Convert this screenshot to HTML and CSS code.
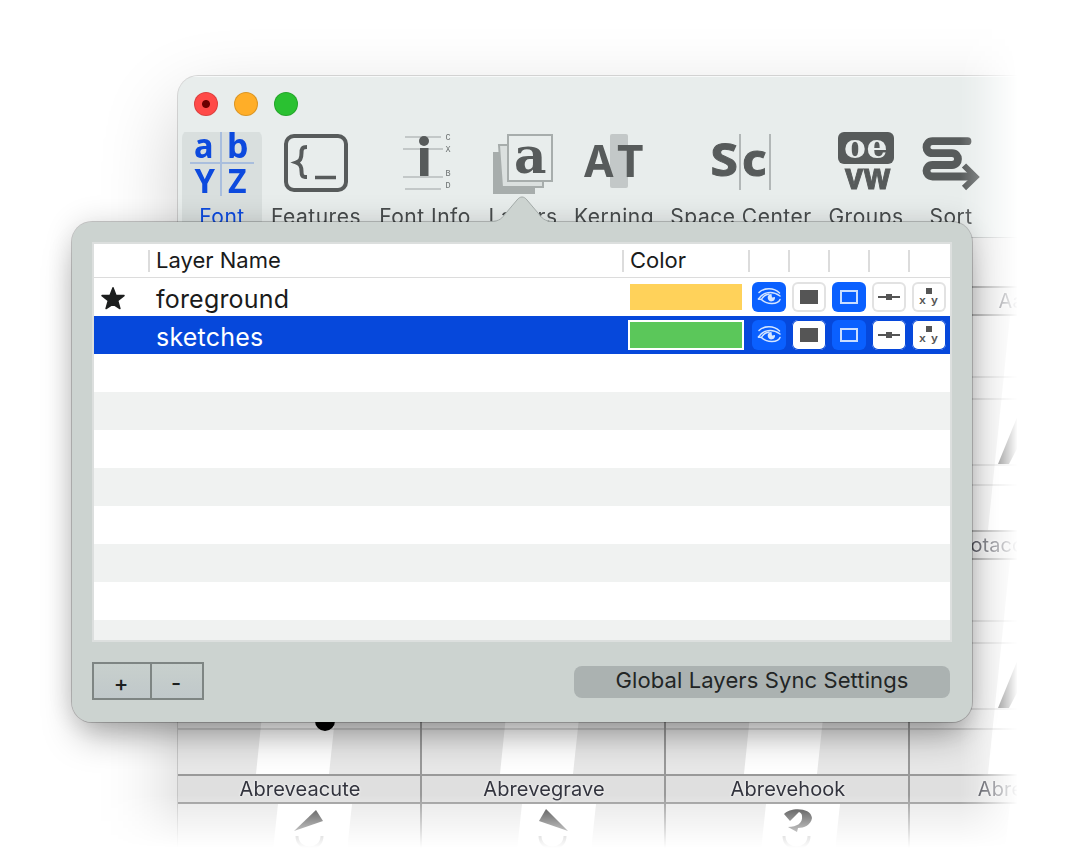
FILE: index.html
```html
<!DOCTYPE html>
<html lang="en">
<head>
    <meta charset="UTF-8">
    <meta name="viewport" content="width=device-width, initial-scale=1.0">
    <title>Layers</title>
    <link rel="stylesheet" href="styles.css">
</head>
<body>
    <div class="stage">
        <div class="backdrop">
            <div class="window">
                <div class="titlebar">
                    <span class="light close"></span>
                    <span class="light minimize"></span>
                    <span class="light zoom"></span>
                </div>

                <div class="toolbar">
                    <div class="tool tool-font active">
                        <svg width="80" height="68" viewBox="182 130 80 68">
                            <path d="M190 163H254M221 132V196" stroke="#a9bedd" stroke-width="2"/>
                            <g class="sans-bold" fill="#0d4ade" font-size="34">
                                <text x="194" y="158" textLength="20" lengthAdjust="spacingAndGlyphs">a</text>
                                <text x="227" y="158" textLength="22" lengthAdjust="spacingAndGlyphs">b</text>
                                <text x="194.500" y="193" textLength="21" lengthAdjust="spacingAndGlyphs">Y</text>
                                <text x="228" y="193" textLength="19" lengthAdjust="spacingAndGlyphs">Z</text>
                            </g>
                        </svg>
                        <span>Font</span>
                    </div>
                    <div class="tool tool-features">
                        <svg width="108" height="68" viewBox="262 130 108 68">
                            <rect x="286" y="136" width="60" height="54" rx="8" fill="none" stroke="#575b5b" stroke-width="4"/>
                            <path d="M307 147C302 147 301.500 149 301.500 153C301.500 159 300 161 296 162.500C300 164 301.500 166 301.500 171C301.500 175.500 302 177 307 177" fill="none" stroke="#575b5b" stroke-width="4"/>
                            <path d="M315 177.500H336" stroke="#575b5b" stroke-width="3.500"/>
                        </svg>
                        <span>Features</span>
                    </div>
                    <div class="tool tool-info">
                        <svg width="110" height="68" viewBox="370 130 110 68">
                            <path d="M405 137H441M403 149H443M403 177H443M405 189H441" stroke="#c3c8c8" stroke-width="2"/>
                            <circle cx="424" cy="141" r="5" fill="#575b5b"/>
                            <rect x="420" y="148" width="8.500" height="28" fill="#575b5b"/>
                            <g class="mono" fill="#6d7272" font-size="8.500">
                                <text x="445.500" y="140">C</text>
                                <text x="445.500" y="151.500">X</text>
                                <text x="445.500" y="175.500">B</text>
                                <text x="445.500" y="187.500">D</text>
                            </g>
                        </svg>
                        <span>Font Info</span>
                    </div>
                    <div class="tool tool-layers">
                        <svg width="86" height="68" viewBox="480 130 86 68">
                            <path d="M493 152H535V194H493Z" fill="#a7adac"/>
                            <path d="M499 145H543V187H502Z" fill="#dbe0df" stroke="#a7adac" stroke-width="2"/>
                            <rect x="508" y="135" width="44" height="46" fill="#e8edec" stroke="#a7adac" stroke-width="2"/>
                            <text class="slab-bold" x="514" y="172.500" font-size="51" fill="#575b5b" textLength="33" lengthAdjust="spacingAndGlyphs">a</text>
                        </svg>
                        <span>Layers</span>
                    </div>
                    <div class="tool tool-kerning">
                        <svg width="96" height="68" viewBox="566 130 96 68">
                            <rect x="610" y="134" width="18" height="54" rx="2" fill="#c3c8c8"/>
                            <g class="sans-bold" fill="#575b5b" font-size="45">
                                <text x="584" y="177" textLength="30" lengthAdjust="spacingAndGlyphs">A</text>
                                <text x="617" y="177" textLength="27" lengthAdjust="spacingAndGlyphs">T</text>
                            </g>
                        </svg>
                        <span>Kerning</span>
                    </div>
                    <div class="tool tool-space">
                        <svg width="158" height="68" viewBox="662 130 158 68">
                            <path d="M740 134V190M770 134V190" stroke="#b2b7b7" stroke-width="2"/>
                            <g class="sans-bold heavy" fill="#575b5b" font-size="45">
                                <text x="710.500" y="175.500" textLength="28" lengthAdjust="spacingAndGlyphs">S</text>
                                <text x="742" y="175.500" textLength="25" lengthAdjust="spacingAndGlyphs">c</text>
                            </g>
                        </svg>
                        <span>Space Center</span>
                    </div>
                    <div class="tool tool-groups">
                        <svg width="92" height="68" viewBox="820 130 92 68">
                            <rect x="838" y="132" width="56" height="32" rx="6" fill="#575b5b"/>
                            <text class="slab-bold" x="844" y="157.500" font-size="34" fill="#e8edec" textLength="44" lengthAdjust="spacingAndGlyphs">oe</text>
                            <text class="sans-bold heavy" x="845" y="189" font-size="35" fill="#575b5b" textLength="46" lengthAdjust="spacingAndGlyphs">vw</text>
                        </svg>
                        <span>Groups</span>
                    </div>
                    <div class="tool tool-sort">
                        <svg width="78" height="68" viewBox="912 130 78 68">
                            <path d="M967.500 141.200H932.500C924.500 141.200 924.500 153.200 932.500 153.200H952C960 153.200 960 165 952 165H932.500C924.500 165 924.500 176.500 932.500 176.500H973" fill="none" stroke="#575b5b" stroke-width="7.800" stroke-linecap="round"/>
                            <path d="M964 165.500L975.500 177L964 188" fill="none" stroke="#575b5b" stroke-width="6"/>
                        </svg>
                        <span>Sort</span>
                    </div>
                </div>

                <div class="glyphs">
                    <div class="cell partial"></div>
                    <div class="cell partial"></div>
                    <div class="cell partial"></div>
                    <div class="cell partial"></div>
                    <div class="name"></div>
                    <div class="name"></div>
                    <div class="name"></div>
                    <div class="name">Aacute</div>

                    <div class="cell"></div>
                    <div class="cell"></div>
                    <div class="cell"></div>
                    <div class="cell">
                        <svg width="242" height="214" viewBox="0 0 242 214">
                            <path class="body" d="M100 0H174L151 214H78Z"/>
                            <path class="guide" d="M0 61H242M0 83H242M0 149H242M0 169H242"/>
                            <path d="M88 148L124 60V100L99 148Z" fill="#222"/>
                        </svg>
                    </div>
                    <div class="name"></div>
                    <div class="name"></div>
                    <div class="name"></div>
                    <div class="name">Adotaccentgrave2</div>

                    <div class="cell">
                        <svg width="242" height="214" viewBox="0 0 242 214">
                            <path class="body" d="M100 0H174L151 214H78Z"/>
                            <path class="guide" d="M0 169H242"/>
                            <circle cx="147" cy="161" r="10" fill="#000"/>
                        </svg>
                    </div>
                    <div class="cell">
                        <svg width="242" height="214" viewBox="0 0 242 214">
                            <path class="body" d="M100 0H174L151 214H78Z"/>
                            <path class="guide" d="M0 169H242"/>
                        </svg>
                    </div>
                    <div class="cell">
                        <svg width="242" height="214" viewBox="0 0 242 214">
                            <path class="body" d="M100 0H174L151 214H78Z"/>
                            <path class="guide" d="M0 169H242"/>
                        </svg>
                    </div>
                    <div class="cell">
                        <svg width="242" height="214" viewBox="0 0 242 214">
                            <path class="body" d="M100 0H174L151 214H78Z"/>
                            <path class="guide" d="M0 61H242M0 83H242M0 149H242M0 169H242"/>
                            <path d="M88 148L124 60V100L99 148Z" fill="#222"/>
                        </svg>
                    </div>
                    <div class="name">Abreveacute</div>
                    <div class="name">Abrevegrave</div>
                    <div class="name">Abrevehook</div>
                    <div class="name">Abrevetilde</div>

                    <div class="cell last">
                        <svg width="242" height="45" viewBox="0 0 242 45">
                            <path class="body" d="M100 0H174L169.200 45H95.200Z"/>
                            <path d="M116 27L138 6L145 17Z" fill="#333"/>
                            <path class="breve" d="M119 32C119 48 144 48 144 32"/>
                        </svg>
                    </div>
                    <div class="cell last">
                        <svg width="242" height="45" viewBox="0 0 242 45">
                            <path class="body" d="M100 0H174L169.200 45H95.200Z"/>
                            <path d="M124 5L117 17L146 27Z" fill="#333"/>
                            <path class="breve" d="M118 32C118 48 143 48 143 32"/>
                        </svg>
                    </div>
                    <div class="cell last">
                        <svg width="242" height="45" viewBox="0 0 242 45">
                            <path class="body" d="M100 0H174L169.200 45H95.200Z"/>
                            <path d="M118 10C124 3 145 3 146 14C145 21 138 24 132 24L131 28L122 23C131 23 137 19 136 12C136 10 135 9 133 8L124 17Z" fill="#333"/>
                            <path class="breve" d="M118 32C118 48 143 48 143 32"/>
                        </svg>
                    </div>
                    <div class="cell last">
                        <svg width="242" height="45" viewBox="0 0 242 45">
                            <path class="body" d="M100 0H174L169.200 45H95.200Z"/>
                        </svg>
                    </div>
                </div>
            </div>
            <div class="popover-shadow"></div>
        </div>

        <div class="popover">
            <svg class="arrow" width="64" height="27" viewBox="0 0 64 27">
                <path d="M0 27V26C10 26 12 22 16 17L27 4C30 0 34 0 37 4L48 17C52 22 54 26 64 26V27Z" fill="#ccd3d0"/>
                <path d="M0 25.500C10 25.500 12 22 16 17L27 4C30 0 34 0 37 4L48 17C52 22 54 25.500 64 25.500" fill="none" stroke="#a3aaa8"/>
            </svg>

            <div class="table">
                <div class="row header">
                    <span></span>
                    <span class="label">Layer Name</span>
                    <span class="label">Color</span>
                    <span></span>
                    <span></span>
                    <span></span>
                    <span></span>
                    <span></span>
                </div>
                <div class="row">
                    <svg class="star" width="24" height="23" viewBox="0 0 24 23"><path d="M12 .800L14.900 8.200L23 8.600L16.700 13.600L18.900 21.500L12 17.100L5.100 21.500L7.300 13.600L1 8.600L9.100 8.200Z" fill="#1c1e1e" stroke="#1c1e1e" stroke-width="1.500" stroke-linejoin="round"/></svg>
                    <span class="layer">foreground</span>
                    <span class="swatch yellow"></span>
                    <span class="toggle on"><svg width="34" height="30" viewBox="0 0 34 30"><use href="#eye"/></svg></span>
                    <span class="toggle"><svg width="34" height="30" viewBox="0 0 34 30"><use href="#fill"/></svg></span>
                    <span class="toggle on"><svg width="34" height="30" viewBox="0 0 34 30"><use href="#stroke"/></svg></span>
                    <span class="toggle"><svg width="34" height="30" viewBox="0 0 34 30"><use href="#points"/></svg></span>
                    <span class="toggle"><svg width="34" height="30" viewBox="0 0 34 30"><use href="#coords"/></svg></span>
                </div>
                <div class="row selected">
                    <span></span>
                    <span class="layer">sketches</span>
                    <span class="swatch green"></span>
                    <span class="toggle on"><svg width="34" height="30" viewBox="0 0 34 30"><use href="#eye"/></svg></span>
                    <span class="toggle"><svg width="34" height="30" viewBox="0 0 34 30"><use href="#fill"/></svg></span>
                    <span class="toggle on"><svg width="34" height="30" viewBox="0 0 34 30"><use href="#stroke"/></svg></span>
                    <span class="toggle"><svg width="34" height="30" viewBox="0 0 34 30"><use href="#points"/></svg></span>
                    <span class="toggle"><svg width="34" height="30" viewBox="0 0 34 30"><use href="#coords"/></svg></span>
                </div>
                <div class="stripes"></div>
            </div>

            <div class="footer">
                <div class="segmented">
                    <button class="segment">+</button>
                    <button class="segment">-</button>
                </div>
                <button class="sync">Global Layers Sync Settings</button>
            </div>
        </div>
    </div>

    <!-- Toggle icons shared by the layer rows -->
    <svg class="symbols" width="0" height="0">
        <symbol id="eye" viewBox="0 0 34 30">
            <g fill="none" stroke="#d5e6ff" stroke-width="1.500" stroke-linecap="round">
                <path d="M7 10.500C12 5.500 22 5.500 27.500 11"/>
                <path d="M6.500 17C11 10 20 8 28 14"/>
                <path d="M6.500 17L9.500 17.500C14 22.500 26 23 28 17.500"/>
                <path d="M9.500 17.500C11 14 14 12.500 17 12"/>
            </g>
            <path d="M19.500 12A3.700 3.700 0 1 0 23 15L20 15.500Z" fill="#d5e6ff"/>
        </symbol>
        <symbol id="fill" viewBox="0 0 34 30">
            <rect x="8" y="8" width="18" height="14" fill="#555"/>
        </symbol>
        <symbol id="stroke" viewBox="0 0 34 30">
            <rect x="9" y="9" width="16" height="12" fill="none" stroke="#c9deff" stroke-width="2"/>
        </symbol>
        <symbol id="points" viewBox="0 0 34 30">
            <path d="M6 15H28" stroke="#555" stroke-width="2"/>
            <rect x="14" y="12" width="6" height="6" fill="#555"/>
        </symbol>
        <symbol id="coords" viewBox="0 0 34 30">
            <rect x="14" y="6" width="6" height="6" fill="#555"/>
            <text class="mono-bold" x="7" y="21.500" font-size="11.500" fill="#555">x</text>
            <text class="mono-bold" x="19" y="21.500" font-size="11.500" fill="#555">y</text>
        </symbol>
    </svg>
</body>
</html>
```

FILE: styles.css
```css
:root {
    --chrome: #e8edec;
    --popover: #ccd3d0;
    --ink: #484c4d;
    --accent: #0a60ff;
    --line: #999;
}

* {
    box-sizing: border-box;
}

body {
    margin: 0;
    background: #fff;
    font-family: Inter, "Liberation Sans", sans-serif;
    overflow: hidden;
}

.stage {
    position: relative;
    width: 1073px;
    height: 849px;
    overflow: hidden;
}

/* Window behind the popover, faded out to the right and the bottom */
.backdrop {
    width: 1017px;
    height: 849px;
    padding: 76px 0 0 178px;
    overflow: hidden;
    -webkit-mask-image: linear-gradient(to right, #000 960px, rgba(0, 0, 0, 0.8) 976px, rgba(0, 0, 0, 0.35) 1000px, transparent 1018px), linear-gradient(to bottom, #000 795px, transparent 848px);
    -webkit-mask-composite: source-in;
    mask-image: linear-gradient(to right, #000 960px, rgba(0, 0, 0, 0.8) 976px, rgba(0, 0, 0, 0.35) 1000px, transparent 1018px), linear-gradient(to bottom, #000 795px, transparent 848px);
    mask-composite: intersect;
}

.window {
    width: 974px;
    height: 900px;
    border-radius: 20px 0 0 0;
    background: var(--chrome);
    box-shadow: 0 0 0 1px rgba(0, 0, 0, 0.14), 0 30px 80px rgba(0, 0, 0, 0.2);
    overflow: hidden;
}

.titlebar {
    display: flex;
    gap: 16px;
    height: 54px;
    padding: 16px 0 0 16px;
    box-shadow: inset 0 1px 0 #f7f9f9;
}

.light {
    width: 24px;
    height: 24px;
    border-radius: 50%;
    border: 1px solid rgba(0, 0, 0, 0.14);
}

.close {
    background: radial-gradient(circle, #6b0000 3.500px, #ff4a48 4.500px);
}

.minimize {
    background: #ffae28;
}

.zoom {
    background: #2ac131;
}

.toolbar {
    display: flex;
    height: 107px;
    padding-left: 4px;
}

.tool {
    display: flex;
    flex-direction: column;
    align-items: center;
    height: 107px;
    color: var(--ink);
    font-size: 21px;
    letter-spacing: 0.5px;
    line-height: 26px;
    white-space: nowrap;
}

.tool svg {
    flex: none;
    margin-bottom: 6px;
}

.tool.active {
    background: linear-gradient(#d9dfde, #d9dfde) 0 2px no-repeat;
    border-radius: 8px;
    color: #0d4ade;
}

.tool-font { width: 80px; }
.tool-features { width: 108px; }
.tool-info { width: 110px; }
.tool-layers { width: 86px; }
.tool-kerning { width: 96px; }
.tool-space { width: 158px; }
.tool-groups { width: 92px; }
.tool-sort { width: 78px; }

.sans-bold {
    font-family: "Noto Sans", sans-serif;
    font-weight: bold;
}

.heavy {
    stroke: #575b5b;
    stroke-width: 1px;
}

.slab-bold {
    font-family: "DejaVu Serif", serif;
    font-weight: bold;
}

.mono {
    font-family: "Liberation Mono", monospace;
}

.mono-bold {
    font-family: "Liberation Mono", monospace;
    font-weight: bold;
}

/* Glyph overview */
.glyphs {
    display: grid;
    grid-template-columns: 244px 244px 244px 244px;
    background: #ececec;
    border-top: 1px solid #b9bdbd;
}

.cell {
    height: 214px;
    background: #e8e8e8;
    border-right: 2px solid var(--line);
}

.cell svg {
    display: block;
}

.cell.partial {
    height: 48px;
}

.cell.last {
    height: 45px;
}

.body {
    fill: #fff;
}

.guide {
    fill: none;
    stroke: rgba(0, 0, 0, 0.13);
    stroke-width: 2;
}

.breve {
    fill: none;
    stroke: #888;
    stroke-width: 3;
}

.name {
    height: 30px;
    padding-left: 2px;
    border: solid var(--line);
    border-width: 2px 2px 2px 0;
    background: #dfdfdf;
    color: #33343e;
    font-size: 20px;
    letter-spacing: 0.1px;
    line-height: 27px;
    text-align: center;
    text-shadow: 0 0 3px #fff;
}

.popover-shadow {
    position: absolute;
    left: 72px;
    top: 222px;
    width: 900px;
    height: 500px;
    border-radius: 20px;
    box-shadow: 0 20px 36px -8px rgba(0, 0, 0, 0.34), 0 0 30px rgba(0, 0, 0, 0.14);
}

/* Layers popover */
.popover {
    position: absolute;
    left: 72px;
    top: 222px;
    width: 900px;
    height: 500px;
    padding: 20px;
    border-radius: 20px;
    background: var(--popover);
    box-shadow: 0 0 0 1px rgba(0, 0, 0, 0.2);
}

.arrow {
    position: absolute;
    left: 418px;
    top: -26px;
}

.table {
    width: 860px;
    height: 400px;
    border: 2px solid #dcdfde;
    background: #fff;
    overflow: hidden;
}

.row {
    display: grid;
    grid-template-columns: 56px 474px 126px 40px 40px 40px 40px 40px;
    align-items: center;
    height: 38px;
    color: #1a1b1b;
}

.row.header {
    height: 34px;
    border-bottom: 1px solid #dcdcdc;
}

.header span {
    height: 22px;
    border-right: 2px solid #dcdcdc;
}

.header span:last-child {
    border-right: 0;
}

.header .label {
    padding-left: 6px;
    font-size: 22px;
    line-height: 21px;
}

.star {
    margin: 2px 0 0 7px;
}

.layer {
    padding: 3px 0 0 6px;
    font-size: 25px;
    letter-spacing: 0.2px;
    line-height: 34px;
}

.selected {
    background: #0648db;
    color: #fff;
}

.swatch {
    width: 116px;
    height: 30px;
    margin-left: 4px;
    border: 2px solid #fff;
}

.yellow { background: #ffd25a; }
.green { background: #5bc75a; }

.toggle {
    width: 34px;
    height: 30px;
    margin-left: 2px;
    border-radius: 6px;
    background: #fff;
    box-shadow: inset 0 0 0 2px #e2e2e2;
}

.toggle svg {
    display: block;
}

.toggle.on {
    background: var(--accent);
    box-shadow: none;
}

.selected .toggle:not(.on) {
    background: #fff;
    box-shadow: inset 0 0 0 1px #0648db;
}

.stripes {
    height: 286px;
    background: repeating-linear-gradient(to bottom, #fff 0 38px, #f0f2f1 38px 76px);
}

.footer {
    display: flex;
    justify-content: space-between;
    padding-top: 20px;
}

button {
    margin: 0;
    padding: 0;
    border: 0;
    font-family: inherit;
    color: #1c1f1f;
}

.segmented {
    display: flex;
    width: 112px;
    height: 38px;
    border: 2px solid #7e8583;
}

.segment {
    flex: none;
    width: 50px;
    padding: 4px 2px 0 0;
    background: linear-gradient(#c8d0cd, #c0c8ca);
    font-size: 22px;
    font-weight: 500;
}

.segment:first-child {
    width: 58px;
    border-right: 2px solid #7e8583;
}

.sync {
    width: 376px;
    height: 32px;
    margin: 4px 2px 0 0;
    padding-bottom: 4px;
    border-radius: 8px;
    background: #abb2b1;
    color: #222525;
    font-size: 22px;
    letter-spacing: 0.1px;
}
```
